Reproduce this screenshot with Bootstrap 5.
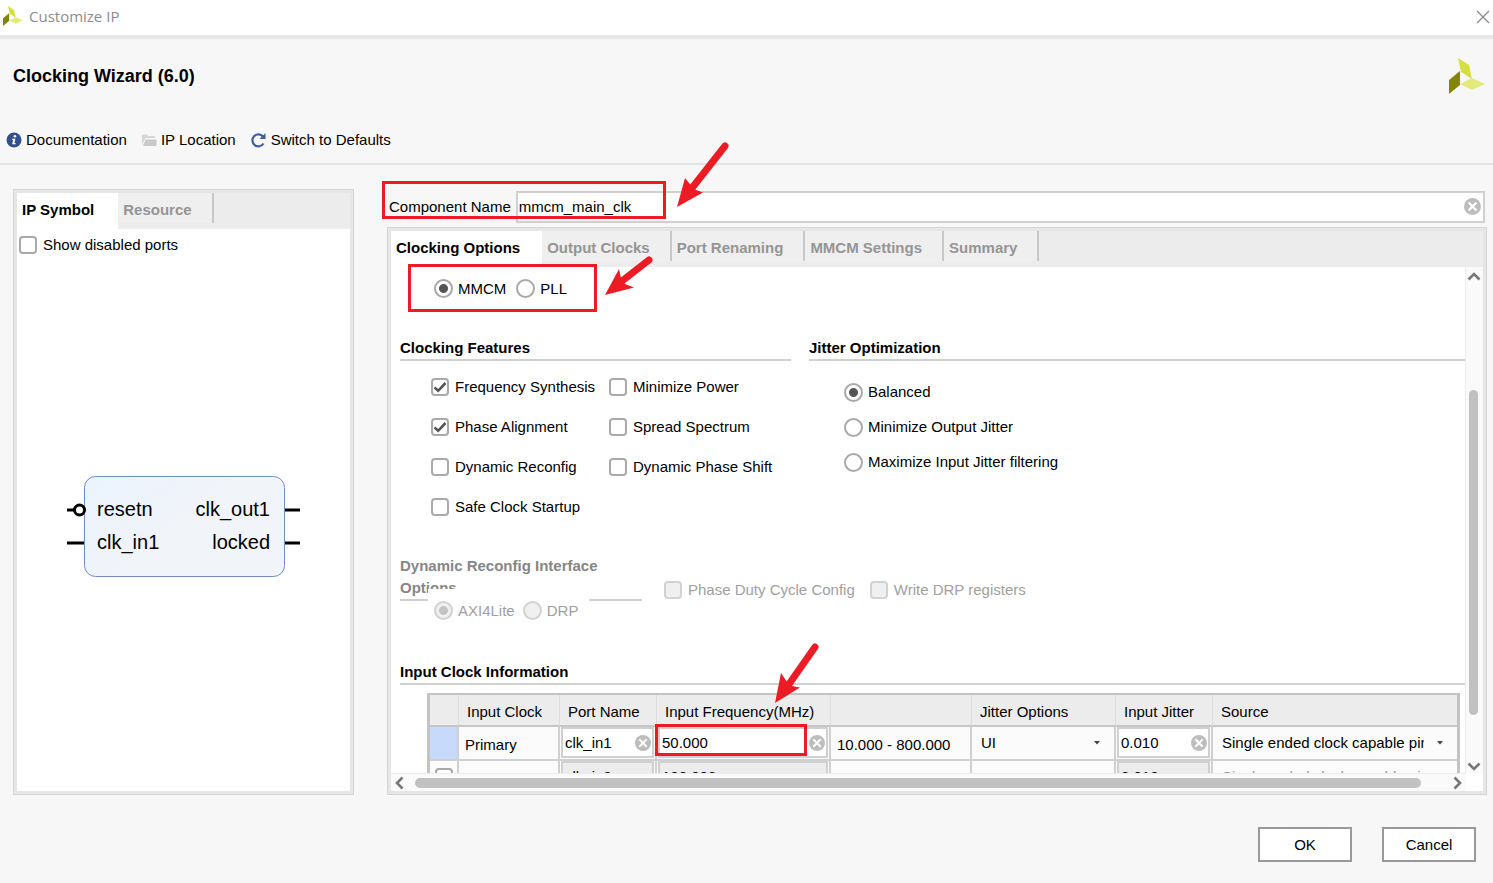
<!DOCTYPE html>
<html lang="en">
<head>
<meta charset="utf-8">
<meta name="viewport" content="width=device-width, initial-scale=1">
<title>Customize IP</title>
<link rel="stylesheet" href="https://cdn.jsdelivr.net/npm/bootstrap@5.3.0/dist/css/bootstrap.min.css">
<style>
  body { font: 15px/20px "Liberation Sans", Arial, sans-serif; color: #000; background: #f7f7f7; }
  .window { height: 100vh; min-height: 700px; }
  .titlebar { flex: none; height: 39px; background: #fff; border-bottom: 4px solid #e6e6e6; padding: 0 3px 3px; font-family: "Open Sans", sans-serif; color: #8c8c8c; gap: 6px; }
  .bare { border: 0; background: none; padding: 0; color: inherit; font: inherit; line-height: 1; }
  .wiz-head { flex: none; height: 78px; padding: 0 8px 4px 13px; }
  .wiz-head h1 { font-size: 18px; line-height: 20px; font-weight: 700; margin: 0; }
  .tools { flex: none; height: 48px; padding: 0 6px; gap: 14px; border-bottom: 2px solid #e3e3e3; }
  .tools a { color: #000; text-decoration: none; gap: 4px; }
  .tools svg { flex: none; }
  .workspace { flex: 1 1 0; min-height: 0; padding: 24px 6px 0 13px; gap: 33px; }
  .main-col { min-width: 0; }
  .fit { min-height: 0; min-width: 0; }
  .side { width: 341px; flex: none; }
  .frame { border: 1px solid #d4d4d4; background: #e6e6e6; padding: 3px; }
  .frame-in { background: #fff; min-width: 0; }
  .tabstrip { background: #ececec; height: 36px; flex: none; }
  .tabstrip .nav-link { font-weight: 700; color: #959595; border: 0; border-radius: 0; border-right: 2px solid #c8c8c8; height: 30px; padding: 7px 20px 0 5px; line-height: 20px; white-space: nowrap; display: flex; align-items: flex-start; }
  .tabstrip .nav-link.active { color: #000; background: #fff; height: 36px; border: 0; padding-right: 22px; }
  .side .tabstrip .nav-link.active { padding-right: 24px; }
  .choice { display: flex; align-items: center; gap: 6px; white-space: nowrap; }
  .choice .form-check-input { flex: none; margin: 0; width: 18px; height: 18px; border: 2px solid #a9a9a9; background-color: #fff; box-shadow: none; }
  .choice .form-check-input[type=checkbox] { border-radius: 4px; }
  .choice .form-check-input[type=radio] { width: 19px; height: 19px; margin-right: -1px; }
  .choice .form-check-input:checked { background-color: #fff; border-color: #a9a9a9; }
  .choice .form-check-input:checked[type=checkbox] { background-size: 14px 14px; background-image: url("data:image/svg+xml,%3csvg xmlns='http://www.w3.org/2000/svg' viewBox='0 0 14 14'%3e%3cpath d='M1.5 7.5l3.7 3.3L12.5 3' fill='none' stroke='%23555' stroke-width='2.6'/%3e%3c/svg%3e"); }
  .choice .form-check-input:checked[type=radio] { background-image: radial-gradient(circle, #555 4px, transparent 5px); }
  .choice .form-check-input:disabled { opacity: 1; background-color: #eff0f1; border-color: #d2d2d2; }
  .choice .form-check-input:disabled:checked { background-image: radial-gradient(circle, #c4c4c4 4px, transparent 5px); }
  .choice .form-check-input:disabled ~ label { opacity: 1; color: #a0a0a0; }
  .ports { padding: 6px 0 0 2px; }
  .symbol { width: 233px; padding-top: 8px; }
  .symbol svg { display: block; }
  .symbol text { font-family: "Liberation Sans", Arial, sans-serif; font-size: 20px; }
  .name-row { padding: 2px 2px 0; height: 35px; gap: 5px; }
  .clearable { display: flex; align-items: center; background: #fff; border: 2px solid #d0d0d0; padding-right: 2px; }
  .clearable input { flex: 1 1 0; min-width: 0; width: 0; border: 0; background: none; padding: 0 0 0 1px; outline: 0; color: #000; }
  .clearable .bare svg { display: block; }
  .off { background: #ececec; }
  .view { overflow: hidden; }
  .sheet { padding: 12px 0 0 9px; }
  .sect { font-size: 15px; line-height: 20px; font-weight: 700; margin: 0; padding-bottom: 1px; border-bottom: 2px solid #d0d0d0; }
  .kind { padding-left: 34px; gap: 10px; height: 20px; }
  .opts { margin-top: 39px; padding-bottom: 28px; gap: 18px; }
  .features { width: 391px; flex: none; }
  .feat-grid { display: grid; grid-template-columns: 178px 1fr; grid-auto-rows: 40px; padding: 6px 0 0 31px; }
  .jit-grid { display: grid; grid-auto-rows: 35px; padding: 14px 0 0 35px; }
  .reconf { width: 242px; flex: none; }
  .reconf .sect { line-height: 22px; padding-bottom: 0; color: #868686; }
  .reconf-pick { position: absolute; left: 28px; top: 34px; width: 161px; height: 34px; padding: 10px 0 0 6px; background: #fff; gap: 8px; }
  .drp { gap: 15px; padding: 24px 0 0 22px; }
  .info { margin-top: 61px; }
  .clk { width: calc(100% - 32px); margin: 8px 0 0 27px; table-layout: fixed; border-collapse: separate; border-spacing: 0; border: 2px solid #c3c3c3; border-left-width: 3px; border-right-width: 3px; }
  .clk th { height: 32px; background: #ececec; font-weight: 400; padding: 4px 0 0 8px; border-right: 1px solid #dcdcdc; border-bottom: 2px solid #c6c6c6; white-space: nowrap; }
  .clk td { height: 34px; background: #fbfbfb; padding: 0 1px; border-right: 2px solid #d0d0d0; border-bottom: 2px solid #d0d0d0; white-space: nowrap; vertical-align: middle; }
  .clk td.cell { padding: 4px 0 0 6px; }
  .clk th:last-child, .clk td:last-child { border-right: 0; }
  .clk .clearable { height: 31px; padding-right: 1px; }
  .clk .clearable input { padding-left: 2px; }
  .clk select { width: 100%; border: 0; appearance: none; color: #000; outline: 0; padding: 0 32px 0 8px; background: url("data:image/svg+xml,%3csvg xmlns='http://www.w3.org/2000/svg' viewBox='0 0 6 4'%3e%3cpath d='M0 0h6L3 3.4z' fill='%23444'/%3e%3c/svg%3e") no-repeat right 13px center / 6px 4px; }
  .clk select:disabled { color: #999; opacity: 1; background-image: none; }
  .clk .picked { background: #c8dafc; }
  .w-sel { width: 29px; } .w-clk { width: 101px; } .w-txt { width: 97px; } .w-frq { width: 174px; } .w-rng { width: 141px; } .w-opt { width: 144px; }
  .rail-v { width: 18px; flex: none; background: #fafafa; border-left: 1px solid #ececec; padding: 5px 1px 2px 0; }
  .rail-v .thumb { width: 9px; border-radius: 5px; background: #c1c1c1; flex: 322 1 0; }
  .rail-v .before { flex: 109 1 0; }
  .rail-v .after { flex: 47 1 0; }
  .rail-h { height: 18px; flex: none; background: #fafafa; margin-right: 17px; padding: 0 3px; border-top: 1px solid #ececec; gap: 10px; }
  .rail-h .thumb { height: 10px; border-radius: 5px; background: #c1c1c1; flex: 1; margin-right: 21px; }
  .callout-box, .callout-arrow { position: absolute; pointer-events: none; }
  .callout-box { border: 3px solid #ed1c24; }
  .callout-arrow { fill: #ed1c24; stroke: #ed1c24; }
  .box-name { left: -5px; top: -8px; width: 284px; height: 38px; }
  .box-kind { left: 21px; top: 75px; width: 189px; height: 48px; }
  .box-freq { left: 268px; top: 535px; width: 152px; height: 32px; }
  .arrow-name { left: 287px; top: -49px; }
  .arrow-kind { left: 217px; top: 65px; }
  .arrow-freq { left: 385px; top: 452px; }
  .foot { flex: none; height: 88px; padding: 11px 17px 0; gap: 30px; }
  .foot button { width: 94px; height: 35px; border: 2px solid #999; border-radius: 0; background: #fff; color: #000; font-size: 15px; line-height: 20px; padding: 0; }
</style>
</head>
<body>
<svg width="0" height="0" class="position-absolute" aria-hidden="true">
  <symbol id="logo" viewBox="0 0 36 36">
    <path d="M9 0l11 7 3 14-11-7z" fill="#d6e03d"/><path d="M0 22l11-9v14L0 36z" fill="#848508"/><path d="M11 26l12-6 13 6-13 6z" fill="#e3ea7c"/>
  </symbol>
  <symbol id="clear" viewBox="0 0 16 16">
    <circle cx="8" cy="8" r="8" fill="#bdbdbd"/><path d="M4.3 4.3l7.4 7.4M11.7 4.3l-7.4 7.4" stroke="#fff" stroke-width="2"/>
  </symbol>
</svg>
<div class="window d-flex flex-column">
  <header class="titlebar d-flex align-items-center">
    <svg width="20" height="20"><use href="#logo"/></svg>
    <span class="me-auto">Customize IP</span>
    <button class="bare" type="button" aria-label="Close"><svg width="14" height="14" viewBox="0 0 14 14" stroke="#888" stroke-width="1.2"><path d="M1 1l12 12M13 1L1 13"/></svg></button>
  </header>
  <div class="wiz-head d-flex align-items-center justify-content-between">
    <h1>Clocking Wizard (6.0)</h1>
    <svg width="36" height="36"><use href="#logo"/></svg>
  </div>
  <nav class="tools d-flex align-items-center">
    <a href="#" class="d-flex align-items-center"><svg width="16" height="16" viewBox="0 0 16 16"><circle cx="8" cy="8" r="7.5" fill="#34508a"/><circle cx="8.9" cy="4.3" r="1.3" fill="#fff"/><path d="M6 6.7h3.4l-1 4.3h1.2v1.2H6.2L7.100 7.900H6z" fill="#fff"/></svg>Documentation</a>
    <a href="#" class="d-flex align-items-center"><svg width="16" height="16" viewBox="0 0 16 16" fill="#c9c9c9"><path d="M1 13V3.500q0-1 1-1h4l1.300 1.500H13q1 0 1 1V6H4.500z" opacity=".75"/><path d="M4.500 7.500H15.500V13q0 1-1 1H2z"/></svg>IP Location</a>
    <a href="#" class="d-flex align-items-center"><svg width="17" height="16" viewBox="0 0 17 16"><path d="M13 4.500A6 6 0 1 0 13.500 11.500" fill="none" stroke="#3f5f9c" stroke-width="2.200"/><path d="M15.500 1v6H9.500z" fill="#3f5f9c"/></svg>Switch to Defaults</a>
  </nav>

  <main class="workspace d-flex">
    <aside class="side frame d-flex">
      <div class="frame-in d-flex flex-column flex-grow-1">
        <div class="nav tabstrip flex-nowrap" role="tablist">
          <button class="nav-link active" type="button" role="tab">IP Symbol</button>
          <button class="nav-link" type="button" role="tab">Resource</button>
        </div>
        <div class="choice ports"><input class="form-check-input" type="checkbox" id="ports"><label for="ports">Show disabled ports</label></div>
        <div class="flex-grow-1 d-flex align-items-center justify-content-center">
          <div class="symbol">
            <svg width="233" height="102" viewBox="0 0 233 102" role="img" aria-label="IP block">
              <defs><linearGradient id="blk" x1="0" y1="0" x2="1" y2=".6"><stop offset="0" stop-color="#eaf4fe"/><stop offset=".35" stop-color="#eef3fb"/><stop offset=".6" stop-color="#f1f4f8"/></linearGradient></defs>
              <rect x="17.500" y=".5" width="200" height="100" rx="11" fill="url(#blk)" stroke="#6f8cc4"/>
              <path d="M0 34h7M0 67h17M218 34h15M218 67h15" stroke="#000" stroke-width="3"/>
              <circle cx="12.500" cy="34" r="5" fill="#fff" stroke="#000" stroke-width="3"/>
              <text x="30" y="40">resetn</text><text x="30" y="73">clk_in1</text>
              <text x="203" y="40" text-anchor="end">clk_out1</text><text x="203" y="73" text-anchor="end">locked</text>
            </svg>
          </div>
        </div>
      </div>
    </aside>

    <section class="main-col position-relative d-flex flex-column flex-grow-1">
      <div class="name-row d-flex align-items-center">
        <label for="cname">Component Name</label>
        <div class="clearable flex-grow-1 align-self-stretch"><input id="cname" type="text" value="mmcm_main_clk"><button class="bare" type="button" aria-label="Clear"><svg width="17" height="17"><use href="#clear"/></svg></button></div>
      </div>
      <div class="frame fit d-flex flex-grow-1 mt-1">
        <div class="frame-in d-flex flex-column flex-grow-1">
          <div class="nav tabstrip flex-nowrap" role="tablist">
            <button class="nav-link active" type="button" role="tab">Clocking Options</button>
            <button class="nav-link" type="button" role="tab">Output Clocks</button>
            <button class="nav-link" type="button" role="tab">Port Renaming</button>
            <button class="nav-link" type="button" role="tab">MMCM Settings</button>
            <button class="nav-link" type="button" role="tab">Summary</button>
          </div>
          <div class="fit d-flex flex-grow-1">
            <div class="view flex-grow-1">
              <div class="sheet">
                <div class="kind d-flex">
                  <div class="choice"><input class="form-check-input" type="radio" name="prim" id="mmcm" checked><label for="mmcm">MMCM</label></div>
                  <div class="choice"><input class="form-check-input" type="radio" name="prim" id="pll"><label for="pll">PLL</label></div>
                </div>
                <div class="opts d-flex">
                  <div class="features">
                    <h2 class="sect">Clocking Features</h2>
                    <div class="feat-grid">
                      <div class="choice"><input class="form-check-input" type="checkbox" id="f1" checked><label for="f1">Frequency Synthesis</label></div>
                      <div class="choice"><input class="form-check-input" type="checkbox" id="f2"><label for="f2">Minimize Power</label></div>
                      <div class="choice"><input class="form-check-input" type="checkbox" id="f3" checked><label for="f3">Phase Alignment</label></div>
                      <div class="choice"><input class="form-check-input" type="checkbox" id="f4"><label for="f4">Spread Spectrum</label></div>
                      <div class="choice"><input class="form-check-input" type="checkbox" id="f5"><label for="f5">Dynamic Reconfig</label></div>
                      <div class="choice"><input class="form-check-input" type="checkbox" id="f6"><label for="f6">Dynamic Phase Shift</label></div>
                      <div class="choice"><input class="form-check-input" type="checkbox" id="f7"><label for="f7">Safe Clock Startup</label></div>
                    </div>
                  </div>
                  <div class="flex-grow-1">
                    <h2 class="sect">Jitter Optimization</h2>
                    <div class="jit-grid">
                      <div class="choice"><input class="form-check-input" type="radio" name="jit" id="j1" checked><label for="j1">Balanced</label></div>
                      <div class="choice"><input class="form-check-input" type="radio" name="jit" id="j2"><label for="j2">Minimize Output Jitter</label></div>
                      <div class="choice"><input class="form-check-input" type="radio" name="jit" id="j3"><label for="j3">Maximize Input Jitter filtering</label></div>
                    </div>
                  </div>
                </div>
                <div class="d-flex align-items-center">
                  <div class="reconf position-relative">
                    <h2 class="sect">Dynamic Reconfig Interface Options</h2>
                    <div class="reconf-pick d-flex">
                      <div class="choice"><input class="form-check-input" type="radio" name="bus" id="axi" checked disabled><label for="axi">AXI4Lite</label></div>
                      <div class="choice"><input class="form-check-input" type="radio" name="bus" id="drp" disabled><label for="drp">DRP</label></div>
                    </div>
                  </div>
                  <div class="drp d-flex">
                    <div class="choice"><input class="form-check-input" type="checkbox" id="pdc" disabled><label for="pdc">Phase Duty Cycle Config</label></div>
                    <div class="choice"><input class="form-check-input" type="checkbox" id="wdr" disabled><label for="wdr">Write DRP registers</label></div>
                  </div>
                </div>
                <h2 class="sect info">Input Clock Information</h2>
                <table class="clk">
                  <colgroup><col class="w-sel"><col class="w-clk"><col class="w-txt"><col class="w-frq"><col class="w-rng"><col class="w-opt"><col class="w-txt"><col></colgroup>
                  <thead><tr><th></th><th>Input Clock</th><th>Port Name</th><th>Input Frequency(MHz)</th><th></th><th>Jitter Options</th><th>Input Jitter</th><th>Source</th></tr></thead>
                  <tbody>
                    <tr>
                      <td class="picked"></td><td class="cell">Primary</td>
                      <td><div class="clearable"><input type="text" aria-label="Port name" value="clk_in1"><button class="bare" type="button" aria-label="Clear"><svg width="16" height="16"><use href="#clear"/></svg></button></div></td>
                      <td><div class="clearable"><input type="text" aria-label="Input frequency" value="50.000"><button class="bare" type="button" aria-label="Clear"><svg width="16" height="16"><use href="#clear"/></svg></button></div></td>
                      <td class="cell">10.000 - 800.000</td>
                      <td><select aria-label="Jitter options"><option>UI</option></select></td>
                      <td><div class="clearable"><input type="text" aria-label="Input jitter" value="0.010"><button class="bare" type="button" aria-label="Clear"><svg width="16" height="16"><use href="#clear"/></svg></button></div></td>
                      <td><select aria-label="Source"><option>Single ended clock capable pin</option></select></td>
                    </tr>
                    <tr>
                      <td><div class="choice"><input class="form-check-input ms-1" type="checkbox" aria-label="Secondary"></div></td><td></td>
                      <td><div class="clearable off"><input type="text" aria-label="Port name" value="clk_in2"></div></td>
                      <td><div class="clearable off"><input type="text" aria-label="Input frequency" value="100.000"></div></td>
                      <td></td><td></td>
                      <td><div class="clearable off"><input type="text" aria-label="Input jitter" value="0.010"></div></td>
                      <td><select aria-label="Source" disabled><option>Single ended clock capable pin</option></select></td>
                    </tr>
                  </tbody>
                </table>
              </div>
            </div>
            <div class="rail-v d-flex flex-column align-items-center">
              <svg width="14" height="9" viewBox="0 0 14 9" fill="none" stroke="#777" stroke-width="2.600"><path d="M1.500 7.500L7 2l5.500 5.500"/></svg>
              <div class="before"></div><div class="thumb"></div><div class="after"></div>
              <svg width="14" height="9" viewBox="0 0 14 9" fill="none" stroke="#777" stroke-width="2.600"><path d="M1.500 1.500L7 7l5.500-5.500"/></svg>
            </div>
          </div>
          <div class="rail-h d-flex align-items-center">
            <svg width="11" height="14" viewBox="0 0 11 14" fill="none" stroke="#777" stroke-width="2.600"><path d="M8.500 1.500L3 7l5.500 5.500"/></svg>
            <div class="thumb"></div>
            <svg width="11" height="14" viewBox="0 0 11 14" fill="none" stroke="#777" stroke-width="2.600"><path d="M2.500 1.500L8 7l-5.500 5.500"/></svg>
          </div>
        </div>
      </div>

      <!-- red callouts lying over the form -->
      <div class="callout-box box-name"></div>
      <div class="callout-box box-kind"></div>
      <div class="callout-box box-freq"></div>
      <svg class="callout-arrow arrow-name" width="60" height="70" viewBox="0 0 60 70"><path d="M51 6L18 48" stroke-width="7" stroke-linecap="round"/><path d="M3 67L11 38 17.500 46 22 50 29 52.500z" stroke="none"/></svg>
      <svg class="callout-arrow arrow-kind" width="52" height="46" viewBox="0 0 52 46"><path d="M45 6L18 27" stroke-width="7" stroke-linecap="round"/><path d="M1 41L15 15 17 24 21 30 30 33.500z" stroke="none"/></svg>
      <svg class="callout-arrow arrow-freq" width="52" height="66" viewBox="0 0 52 66"><path d="M43 6L15 46" stroke-width="7" stroke-linecap="round"/><path d="M3 62L9 32 15 41 20 45 28 46.500z" stroke="none"/></svg>
    </section>
  </main>

  <footer class="foot d-flex align-items-center justify-content-end">
    <button class="btn" type="button">OK</button>
    <button class="btn" type="button">Cancel</button>
  </footer>
</div>
<script src="https://cdn.jsdelivr.net/npm/bootstrap@5.3.0/dist/js/bootstrap.bundle.min.js"></script>
</body>
</html>
